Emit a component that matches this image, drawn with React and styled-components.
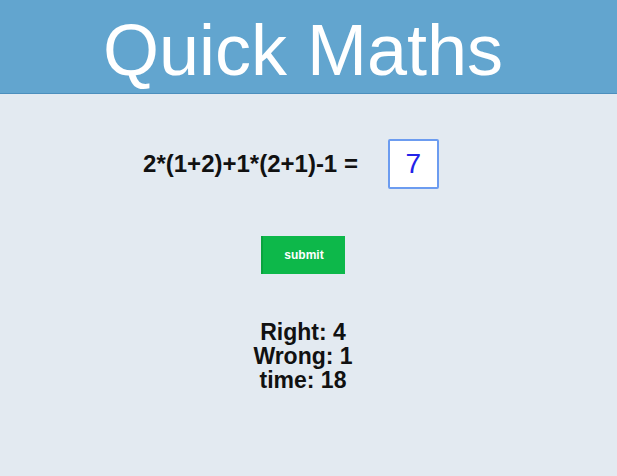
import React from "react";
import styled, { createGlobalStyle } from "styled-components";

const Global = createGlobalStyle`
  html, body { margin: 0; padding: 0; }
  body {
    background: #e3eaf1;
    font-family: "Liberation Sans", Arial, Helvetica, sans-serif;
    min-height: 476px;
  }
`;

const Header = styled.header`
  background: #62a5cf;
  height: 93px;
  border-bottom: 1px solid #4c8fbd;
  display: flex;
  justify-content: center;
  align-items: center;
  padding-right: 11px;
`;

const Title = styled.h1`
  margin: 0;
  color: #ffffff;
  font-weight: 400;
  font-size: 72px;
  line-height: 1;
  margin-top: 6px;
`;

const Main = styled.main`
  display: flex;
  flex-direction: column;
  align-items: center;
  padding-right: 11px;
`;

const Row = styled.div`
  display: flex;
  align-items: center;
  margin-top: 45px;
  margin-left: -24px;
  gap: 30px;
`;

const Equation = styled.span`
  font-weight: 700;
  font-size: 24px;
  color: #111;
`;

const Answer = styled.div`
  width: 47px;
  height: 46px;
  box-sizing: content-box;
  border: 2px solid #6c9cf0;
  border-radius: 2px;
  background: #fff;
  display: flex;
  align-items: center;
  justify-content: center;
  font-size: 28px;
  color: #2323e8;
`;

const Submit = styled.button`
  margin-top: 47px;
  width: 84px;
  height: 38px;
  background: #0db84a;
  border: none;
  border-left: 2px solid #0aa33f;
  color: #fff;
  font-family: "Liberation Sans", Arial, sans-serif;
  font-weight: 700;
  font-size: 12px;
  padding: 0;
`;

const Stats = styled.div`
  margin-top: 46px;
  text-align: center;
  font-weight: 700;
  font-size: 23px;
  line-height: 24px;
  color: #111;
`;

export default function App() {
  return (
    <>
      <Global />
      <Header>
        <Title>Quick Maths</Title>
      </Header>
      <Main>
        <Row>
          <Equation>2*(1+2)+1*(2+1)-1 =</Equation>
          <Answer>7</Answer>
        </Row>
        <Submit>submit</Submit>
        <Stats>
          <div>Right: 4</div>
          <div>Wrong: 1</div>
          <div>time: 18</div>
        </Stats>
      </Main>
    </>
  );
}
